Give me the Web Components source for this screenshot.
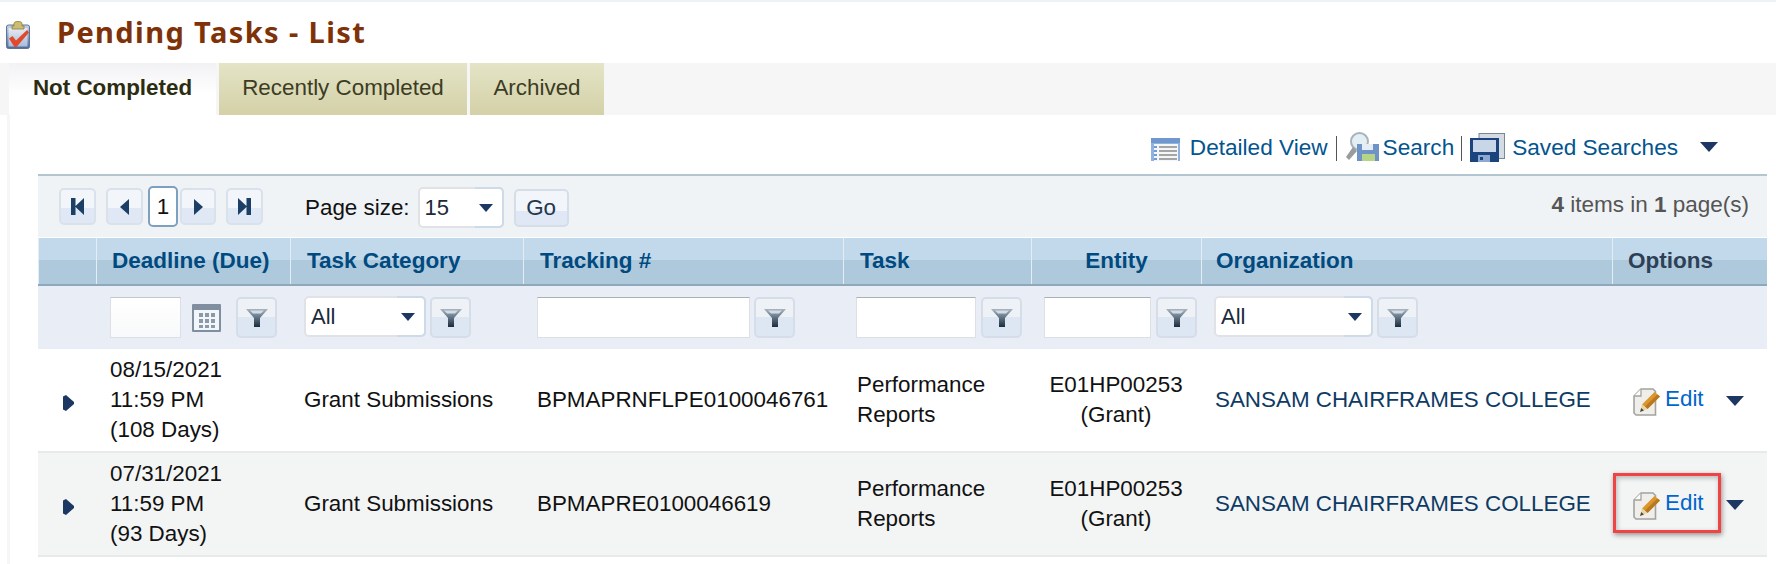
<!DOCTYPE html>
<html lang="en">
<head>
<meta charset="utf-8">
<title>Pending Tasks - List</title>
<style>
    html, body { margin: 0; padding: 0; background: #fff; }
    body { font-family: "Liberation Sans", Arial, sans-serif; }
</style>
</head>
<body>
<pending-tasks-page>
    <page-title>Pending Tasks - List</page-title>
    <task-tabs></task-tabs>
    <grid-panel>
        <grid-toolbar></grid-toolbar>
        <grid-pager></grid-pager>
        <grid-header></grid-header>
        <grid-filters></grid-filters>
        <task-row>
            <span slot="deadline">08/15/2021<br>11:59 PM<br>(108 Days)</span>
            <span slot="category">Grant Submissions</span>
            <span slot="tracking">BPMAPRNFLPE0100046761</span>
            <span slot="task">Performance<br>Reports</span>
            <span slot="entity">E01HP00253<br>(Grant)</span>
            <span slot="organization">SANSAM CHAIRFRAMES COLLEGE</span>
        </task-row>
        <task-row alt highlight>
            <span slot="deadline">07/31/2021<br>11:59 PM<br>(93 Days)</span>
            <span slot="category">Grant Submissions</span>
            <span slot="tracking">BPMAPRE0100046619</span>
            <span slot="task">Performance<br>Reports</span>
            <span slot="entity">E01HP00253<br>(Grant)</span>
            <span slot="organization">SANSAM CHAIRFRAMES COLLEGE</span>
        </task-row>
    </grid-panel>
</pending-tasks-page>

<script>
// column widths are shared by header, filter row and data rows
const COLUMNS = '58px 194px 233px 320px 188px 170px 411px 155px';

function define(name, css, html) {
    customElements.define(name, class extends HTMLElement {
        constructor() {
            super();
            const template = document.createElement('template');
            template.innerHTML = `<style>${css}</style>${html}`;
            this.attachShadow({ mode: 'open' }).appendChild(template.content);
        }
    });
}

const ARROW_DOWN = `<svg width="18" height="10" viewBox="0 0 18 10"><path d="M0 0h18L9 10z" fill="#1c3862"/></svg>`;

const FUNNEL = `<svg width="24" height="22" viewBox="0 0 24 22">
    <defs><linearGradient id="fn" x1="0" y1="0" x2="0" y2="1">
        <stop offset="0" stop-color="#a8b6c2"/><stop offset=".55" stop-color="#56687a"/><stop offset="1" stop-color="#1d2c3a"/>
    </linearGradient></defs>
    <path d="M1 2h22l-8 9v9H9v-9z" fill="url(#fn)"/>
    <path d="M5 3.500h14l-3 3H8z" fill="#d3dce4"/>
</svg>`;

const DOC_PENCIL = `<svg width="28" height="28" viewBox="0 0 28 28">
    <path d="M8 1h12l2.500 2.500V27H3L1 25V8z" fill="#efeeea" stroke="#a3a3a0" stroke-width="1.600"/>
    <path d="M1 8h7V1" fill="#fbfbfa" stroke="#a3a3a0" stroke-width="1.300"/>
    <path d="M9 16.500L21.500 4l5.500 4.500L14.500 21z" fill="#dc962c"/>
    <path d="M12 18.500L24.500 6.500l2.500 2L14.500 21z" fill="#b87820"/>
    <path d="M9 16.500l5.500 4.500L7 24z" fill="#e6d7a6"/>
    <path d="M7 24l1.200-3.900 2.800 2.400z" fill="#4e4a40"/>
</svg>`;

define('pending-tasks-page', `
    :host { display: flex; flex-direction: column; width: 1776px; height: 564px; overflow: hidden; border-top: 2px solid #eef2f6; box-sizing: border-box; }
`, `<slot></slot>`);

define('page-title', `
    :host { display: flex; align-items: center; height: 61px; box-sizing: border-box; padding: 0 0 0 6px; }
    svg { flex: none; margin-top: 4px; }
    h1 { margin: -2px 0 0 27px; font: bold 29px "Noto Sans", "DejaVu Sans", sans-serif; letter-spacing: 1.4px; color: #7f3208; }
`, `<svg width="24" height="28" viewBox="0 0 24 28">
        <defs><linearGradient id="cb" x1="0" y1="0" x2="0" y2="1">
            <stop offset="0" stop-color="#c6d4e8"/><stop offset="1" stop-color="#4d6a9c"/>
        </linearGradient><linearGradient id="pp" x1="0" y1="0" x2="0" y2="1">
            <stop offset="0" stop-color="#e6ecf5"/><stop offset="1" stop-color="#a9bcd8"/>
        </linearGradient></defs>
        <rect x=".5" y="4" width="23" height="23.500" rx="2" fill="url(#cb)" stroke="#5d7397"/>
        <rect x="2.500" y="7" width="19" height="18.500" fill="url(#pp)"/>
        <path d="M8 5V2.500C8 1 9.500 .5 12 .5s4 .5 4 2V5h2v3H6V5z" fill="#cdbd73" stroke="#8c7d3f" stroke-width=".8"/>
        <path d="M3 17.500l3.500-2.500 3.500 4.500L21 9l2 2.500L10.500 26H8.500z" fill="#e2492a"/>
    </svg><h1><slot></slot></h1>`);

define('task-tab', `
    :host { display: flex; align-items: center; justify-content: center; height: 52px; box-sizing: border-box; padding-bottom: 2px;
        background: linear-gradient(#e4e4c6, #d4d1a8); color: #3c3c24; font-size: 22.400px; }
    :host([active]) { background: linear-gradient(#f2f2f5, #fff 60%); color: #2c2c12; font-weight: bold; }
`, `<slot></slot>`);

define('task-tabs', `
    :host { display: flex; gap: 3px; height: 52px; padding-left: 9px; background: #f6f6f6; }
`, `<task-tab active style="width:207px">Not Completed</task-tab>
    <task-tab style="width:248px">Recently Completed</task-tab>
    <task-tab style="width:134px">Archived</task-tab>`);

define('grid-panel', `
    :host { display: block; margin-left: 7px; padding: 0 9px 0 28px; border-left: 3px solid #f6f6f6; flex: 1; }
`, `<slot></slot>`);

define('grid-toolbar', `
    :host { display: flex; align-items: center; justify-content: flex-end; height: 61px; box-sizing: border-box;
        padding: 7px 49px 0 0; border-bottom: 2px solid #b4c5d2; color: #02558f; font-size: 22.600px; }
    .sep { width: 1px; height: 25px; background: #555; margin: 0 8px; }
    .sep.narrow { margin-left: 7px; }
    svg { flex: none; display: block; }
    .tail { margin-left: 22px; margin-top: -2px; }
`, `<svg width="29" height="23" viewBox="0 0 29 23" style="margin:3px 10px 0 0">
        <rect x="0" y="0" width="29" height="24" fill="#8fb2de"/>
        <rect x="0" y="0" width="29" height="5" fill="#6f98cf"/>
        <rect x="3" y="6" width="24" height="17" fill="#f4f6f8"/>
        <path d="M8 8h18v2H8zM8 12h18v2H8zM8 16h18v2H8zM8 20h18v2H8z" fill="#a5a5a5"/>
        <path d="M3 8h3v2H3zM3 12h3v2H3zM3 16h3v2H3zM3 20h3v2H3z" fill="#6f9cd8"/>
    </svg><span>Detailed View</span><span class="sep"></span>
    <svg width="34" height="29" viewBox="0 0 34 29" style="margin:-3px 4px 0 0">
        <circle cx="14.500" cy="9.500" r="8.500" fill="#e4eef5" stroke="#aab3ba" stroke-width="2"/>
        <path d="M8 15L1 25l3 3 8-9z" fill="#999b9c"/>
        <rect x="12" y="12" width="22" height="17" fill="#6f93c6"/>
        <rect x="17" y="12" width="11" height="6" fill="#e7edf5"/>
        <rect x="17" y="22" width="13" height="7" fill="#b6d486"/>
    </svg><span>Search</span><span class="sep narrow"></span>
    <svg width="35" height="29" viewBox="0 0 35 29" style="margin:-1px 7px 0 0">
        <rect x="9" y=".5" width="25.500" height="25" fill="#d5dbe3" stroke="#7b8794"/>
        <rect x="0" y="5" width="29" height="24" fill="#1b447f"/>
        <rect x="3" y="7" width="23" height="12" fill="#c9d6e8"/>
        <rect x="8" y="22" width="12" height="7" fill="#8ea9cf"/>
        <rect x="10" y="24" width="3" height="3" fill="#1b447f"/>
    </svg><span>Saved Searches</span><span class="tail">${ARROW_DOWN}</span>`);

define('pager-button', `
    :host { display: flex; align-items: center; justify-content: center; width: 37px; height: 37px; box-sizing: border-box;
        border: 2px solid #d9e1ea; border-radius: 5px; background: linear-gradient(#f2f5f9 55%, #dfe8f4 55%); }
`, `<slot></slot>`);

define('page-number', `
    :host { display: flex; align-items: center; justify-content: center; width: 31px; height: 41px; box-sizing: border-box;
        border: 2px solid #7e9fbe; border-radius: 5px; background: #fff; color: #111; font-size: 22.400px; }
`, `<slot></slot>`);

define('combo-box', `
    :host { display: flex; position: relative; align-items: center; height: 41px; box-sizing: border-box; padding: 0 9px 0 5px;
        border: 2px solid #e0e2e6; border-radius: 5px; background: #fff; color: #1c2a3a; font-size: 22px; }
    span { flex: 1; }
    svg { display: block; }
    .edge { position: absolute; flex: none; top: -2px; right: -2px; bottom: -2px; width: 29px; box-sizing: border-box;
        border: 2px solid #cddae8; border-left: 0; border-radius: 0 5px 5px 0; }
`, `<span><slot></slot></span><svg width="14" height="8" viewBox="0 0 14 8"><path d="M0 0h14L7 8z" fill="#1c3862"/></svg><span class="edge"></span>`);

define('grid-pager', `
    :host { display: flex; align-items: center; height: 61px; box-sizing: border-box; padding-left: 21px; background: #eff3f6; font-size: 22.400px; color: #111; }
    pager-button svg { display: block; }
    .label { margin: 3px 8px 0 42px; }
    .go { display: flex; align-items: center; justify-content: center; width: 55px; height: 38px; margin: 2px 0 0 10px; box-sizing: border-box;
        border: 2px solid #d5dee8; border-radius: 5px; background: linear-gradient(#f2f5f9 60%, #dfe8f4 60%); color: #22384f; }
    .count { margin: 0 18px 3px auto; color: #555; font-size: 22.500px; }
`, `<pager-button><svg width="13" height="17" viewBox="0 0 13 17"><path d="M0 0h4.500v17H0zM13 0v17L4 8.500z" fill="#1c3f66"/></svg></pager-button>
    <pager-button style="margin-left:10px"><svg width="9" height="16" viewBox="0 0 9 16"><path d="M9 0v16L0 8z" fill="#1c3f66"/></svg></pager-button>
    <page-number style="margin:0 2px 0 5px;width:30px">1</page-number>
    <pager-button style="width:36px"><svg width="9" height="16" viewBox="0 0 9 16"><path d="M0 0v16l9-8z" fill="#1c3f66"/></svg></pager-button>
    <pager-button style="margin-left:10px"><svg width="13" height="17" viewBox="0 0 13 17"><path d="M13 0H8.500v17H13zM0 0v17l9-8.500z" fill="#1c3f66"/></svg></pager-button>
    <span class="label">Page size:</span>
    <combo-box style="width:86px;margin-top:2px">15</combo-box>
    <span class="go">Go</span>
    <span class="count"><b>4</b> items in <b>1</b> page(s)</span>`);

define('grid-header', `
    :host { display: grid; grid-template-columns: ${COLUMNS}; height: 49px; box-sizing: border-box;
        border-top: 1px solid #fff; border-bottom: 2px solid #8ea9bd;
        background: linear-gradient(#c2d8eb 48%, #afc9dc 48%); color: #004a80; font-size: 22.500px; font-weight: bold; }
    div { display: flex; align-items: center; padding-left: 16px; border-left: 1px solid #e4edf4; box-sizing: border-box; }
    div:first-child { border-left: 0; }
    .center { justify-content: center; padding-left: 0; }
    .options { color: #2d4156; }
`, `<div></div><div style="padding-left:15px">Deadline (Due)</div><div>Task Category</div><div>Tracking #</div><div>Task</div><div class="center">Entity</div><div style="padding-left:14px">Organization</div><div class="options" style="padding-left:15px">Options</div>`);

define('filter-button', `
    :host { display: flex; align-items: center; justify-content: center; width: 41px; height: 41px; flex: none; box-sizing: border-box;
        border: 2px solid #d5dee8; border-radius: 5px; background: linear-gradient(#eef2f7 50%, #dde7f3 50%); }
`, FUNNEL);

define('filter-input', `
    :host { display: block; height: 41px; flex: none; box-sizing: border-box; background: #fff; border: 1px solid #dcdfe4; border-top-color: #aab0b8; }
`, ``);

define('grid-filters', `
    :host { display: grid; grid-template-columns: ${COLUMNS}; height: 63px; background: #e9edf5; }
    div { display: flex; align-items: center; gap: 4px; box-sizing: border-box; }
    svg { flex: none; }
`, `<div></div>
    <div style="padding-left:14px;gap:0">
        <filter-input style="width:71px;background:linear-gradient(#fff,#f8f9fa);border-top-color:#c4c8ce"></filter-input>
        <svg width="29" height="28" viewBox="0 0 29 28" style="margin:0 15px 0 11px">
            <rect width="29" height="28" rx="1" fill="#7f8f9f"/>
            <rect x="2" y="6" width="25" height="20" fill="#f3f6f9"/>
            <path d="M7 9h4v4H7zM13 9h4v4h-4zM19 9h4v4h-4zM7 15h4v4H7zM13 15h4v4h-4zM19 15h4v4h-4zM7 21h4v3H7zM13 21h4v3h-4zM19 21h4v3h-4z" fill="#8a9aaa"/>
        </svg>
        <filter-button></filter-button>
    </div>
    <div style="padding-left:14px;gap:4px"><combo-box style="width:122px;margin-top:-2px">All</combo-box><filter-button></filter-button></div>
    <div style="padding-left:14px"><filter-input style="width:213px"></filter-input><filter-button></filter-button></div>
    <div style="padding-left:13px;gap:5px"><filter-input style="width:120px"></filter-input><filter-button></filter-button></div>
    <div style="padding-left:13px;gap:5px"><filter-input style="width:107px"></filter-input><filter-button></filter-button></div>
    <div style="padding-left:13px;gap:4px"><combo-box style="width:159px;margin-top:-2px">All</combo-box><filter-button></filter-button></div>
    <div></div>`);

define('task-row', `
    :host { display: grid; grid-template-columns: ${COLUMNS}; height: 104px; box-sizing: border-box; border-bottom: 2px solid #e8eaea;
        color: #111; font-size: 22.400px; line-height: 30px; }
    :host([alt]) { background: #f3f5f5; }
    .cell { display: flex; align-items: center; box-sizing: border-box; padding-left: 14px; }
    .expand { padding-left: 25px; }
    .expand svg { margin-top: 5px; }
    .entity { justify-content: center; padding-left: 0; text-align: center; }
    .org { color: #0e3a63; }
    .options { position: relative; padding-left: 21px; }
    .options > svg { flex: none; margin-top: 4px; }
    .edit { color: #0066cc; margin: -3px 0 0 4px; }
    .more { margin: -3px 0 0 22px; display: block; }
    .box { display: none; position: absolute; left: 1px; top: 20px; width: 108px; height: 60px; box-sizing: border-box;
        border: 3px solid #f04444; box-shadow: 1px 2px 5px rgba(0, 0, 0, .4), inset 1px 2px 5px rgba(0, 0, 0, .25); pointer-events: none; }
    :host([highlight]) .box { display: block; }
`, `<div class="cell expand"><svg width="11" height="16" viewBox="0 0 11 16"><path d="M0 1.500L3 0l8 7v2l-8 7-3-1.500z" fill="#1c3862"/></svg></div>
    <div class="cell"><span><slot name="deadline"></slot></span></div>
    <div class="cell"><span><slot name="category"></slot></span></div>
    <div class="cell"><span><slot name="tracking"></slot></span></div>
    <div class="cell"><span><slot name="task"></slot></span></div>
    <div class="cell entity"><span><slot name="entity"></slot></span></div>
    <div class="cell org"><span><slot name="organization"></slot></span></div>
    <div class="cell options">${DOC_PENCIL}<span class="edit">Edit</span><span class="more">${ARROW_DOWN}</span><span class="box"></span></div>`);
</script>
</body>
</html>
